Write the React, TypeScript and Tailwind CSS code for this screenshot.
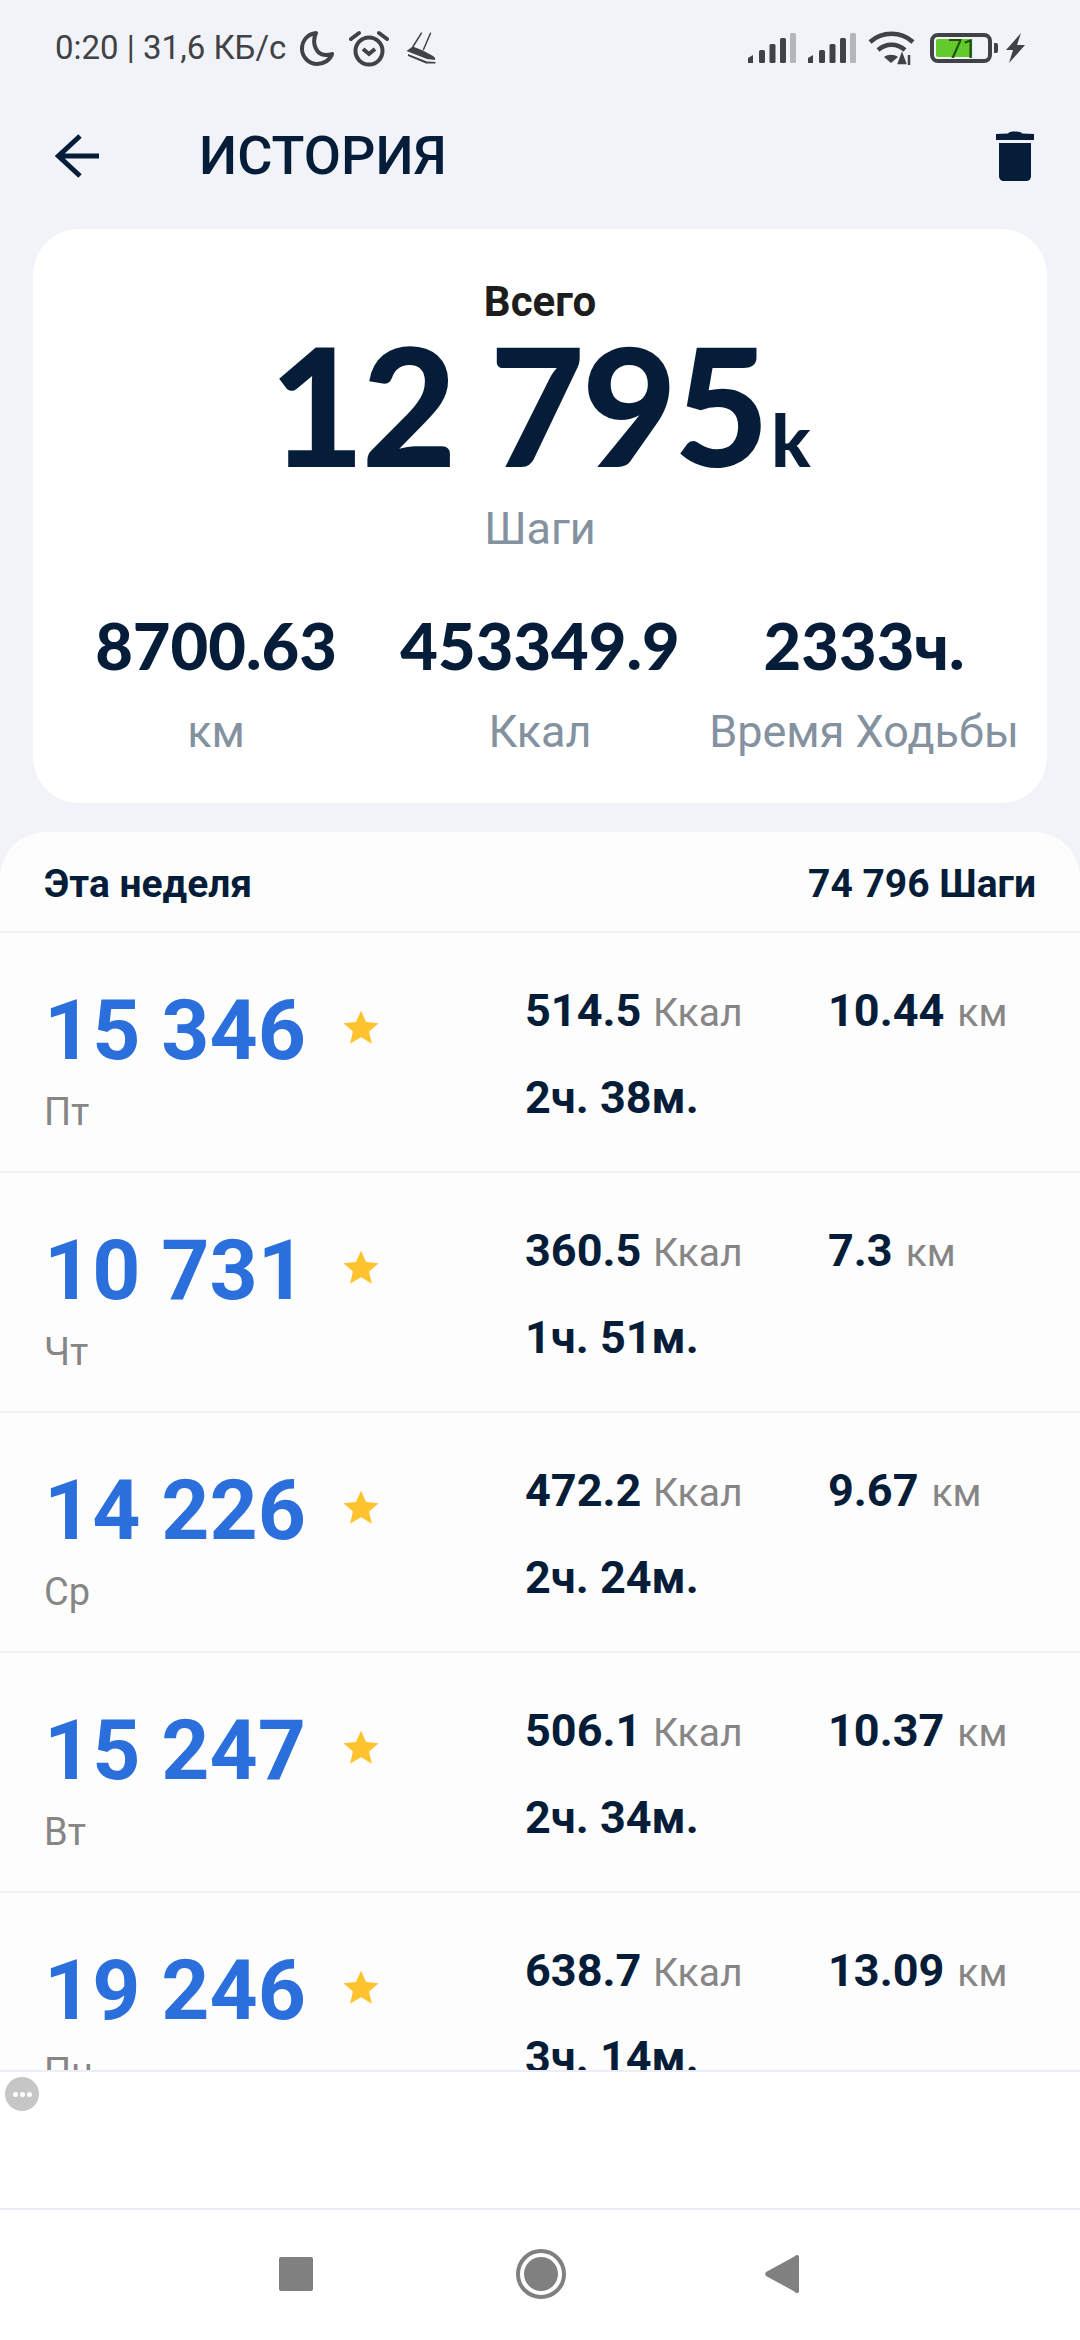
import React from "react";

const rows = [
  { steps: "15 346", day: "Пт", kcal: "514.5", km: "10.44", time: "2ч. 38м." },
  { steps: "10 731", day: "Чт", kcal: "360.5", km: "7.3", time: "1ч. 51м." },
  { steps: "14 226", day: "Ср", kcal: "472.2", km: "9.67", time: "2ч. 24м." },
  { steps: "15 247", day: "Вт", kcal: "506.1", km: "10.37", time: "2ч. 34м." },
  { steps: "19 246", day: "Пн", kcal: "638.7", km: "13.09", time: "3ч. 14м." },
];

function Star() {
  return (
    <svg viewBox="0 0 24 24" className="w-[38px] h-[38px] shrink-0 mt-[-9px]" fill="#fec32f">
      <path d="M12 1.600l3.200 7.300 7.900.7-6 5.200 1.800 7.800L12 18.500l-6.900 4.100 1.800-7.800-6-5.200 7.900-.7z" />
    </svg>
  );
}

function Signal() {
  return (
    <svg viewBox="0 0 48 30" className="w-[48px] h-[30px]">
      <path d="M0 30v-5l5-3v8z" fill="#404246" />
      <rect x="11" y="17" width="6" height="13" rx="1.5" fill="#404246" />
      <rect x="21.5" y="11" width="6" height="19" rx="1.5" fill="#404246" />
      <rect x="32" y="5" width="6" height="25" rx="1.5" fill="#404246" />
      <rect x="42" y="0" width="6" height="30" rx="1.5" fill="#b4b6ba" />
    </svg>
  );
}

function Row({ r }: { r: (typeof rows)[number] }) {
  return (
    <div className="h-[240px] shrink-0 border-b-2 border-[#f2f3f6] flex pl-[44px] pt-[50px]">
      <div className="w-[481px] shrink-0">
        <div className="flex items-center">
          <span className="w-[298px] font-['Roboto'] font-bold text-[84px] leading-[96px] text-[#2a6fdb]">{r.steps}</span>
          <Star />
        </div>
        <div className="font-['Roboto'] text-[38px] leading-[42px] text-[#868686] mt-[12px]">{r.day}</div>
      </div>
      <div className="w-[303px] shrink-0 pt-[3px]">
        <div className="h-[50px] flex items-baseline">
          <span className="font-['Roboto'] font-bold text-[45px] leading-[50px] text-[#051d38] w-[128px]">{r.kcal}</span>
          <span className="font-['Roboto'] text-[39px] leading-[50px] text-[#868686]">Ккал</span>
        </div>
        <div className="font-['Roboto'] font-bold text-[45px] leading-[50px] text-[#051d38] mt-[37px]">{r.time}</div>
      </div>
      <div className="flex items-baseline h-[50px] pt-[3px]">
        <span className="font-['Roboto'] font-bold text-[45px] leading-[50px] text-[#051d38]">{r.km}</span>
        <span className="font-['Roboto'] text-[39px] leading-[50px] text-[#868686] ml-[13px]">км</span>
      </div>
    </div>
  );
}

function Stat({ value, label, w }: { value: string; label: string; w: string }) {
  return (
    <div className={`${w} flex flex-col items-center`}>
      <div className="font-['Lato'] font-black text-[65px] leading-[76px] text-[#051d38] whitespace-nowrap">{value}</div>
      <div className="font-['Roboto'] text-[45px] leading-[50px] text-[#84919f] mt-[24px] whitespace-nowrap">{label}</div>
    </div>
  );
}

export default function App() {
  return (
    <div className="w-[1080px] h-[2340px] bg-[#f1f3f8] flex flex-col overflow-hidden font-['Roboto',sans-serif]">
      <div className="h-[96px] shrink-0 flex items-center pl-[55px] pr-[55px]">
        <span className="text-[33px] leading-[36px] text-[#404246] whitespace-nowrap w-[245px]">0:20 | 31,6 КБ/с</span>
        <svg viewBox="0 0 34 36" className="w-[34px] h-[36px]" fill="none" stroke="#404246" strokeWidth="4" strokeLinejoin="round">
          <path d="M16 3C8 4 2 10 2 19c0 8 7 15 15 15 7 0 13-4 15-10-2 1-5 1-6.500 1C17 25 11 14 16 3z" />
        </svg>
        <svg viewBox="0 0 40 38" className="w-[40px] h-[38px] ml-[15px]" fill="none" stroke="#404246">
          <circle cx="20" cy="22" r="13.500" strokeWidth="4" />
          <path d="M14 20l6 5 6-5" strokeWidth="4" />
          <path d="M2 10l8-6M38 10l-8-6" strokeWidth="4" strokeLinecap="round" />
        </svg>
        <svg viewBox="0 0 30 32" className="w-[30px] h-[32px] ml-[17px]" fill="#404246">
          <path d="M15.700.7L6.700 15M24.700.7L17.300 18" stroke="#404246" strokeWidth="1.500" fill="none" />
          <path d="M.5 19L6.700 14.500 17 18.500l10 5.500c2 1 2.500 3 2 4L21 27z" />
          <path d="M2 22l19 7.500 8.500.5v1.500H20L2 24z" />
        </svg>
        <div className="flex-1" />
        <div className="flex items-center w-[277px]">
          <Signal />
          <div className="ml-[12px]"><Signal /></div>
          <svg viewBox="0 0 47 34" className="w-[47px] h-[34px] ml-[12px]" fill="none" stroke="#404246" strokeWidth="4.500">
            <path d="M2 11c12-11 31-11 43 0" />
            <path d="M10 19c8-7 19-7 27 0" />
            <path d="M23 32l-7-6c4-3 10-3 14 0z" fill="#404246" stroke="none" />
            <path d="M34 24l-3 8h6zM41 24v10" fill="#404246" strokeWidth="2.500" stroke="#404246" />
          </svg>
          <div className="flex items-center ml-[15px]">
            <div className="w-[62px] h-[30px] rounded-[8px] border-[4px] border-[#404246] pl-[2px] pt-[2px] relative">
              <div className="w-[36px] h-[18px] bg-[#62cb2b] rounded-[2px]" />
              <span className="absolute left-[14px] top-[-3px] text-[26px] leading-[30px] text-[#1f5010]">71</span>
            </div>
            <div className="w-[4px] h-[10px] bg-[#404246] rounded-r-[2px] ml-[2px]" />
          </div>
          <svg viewBox="0 0 19 30" className="w-[19px] h-[30px] ml-[8px]" fill="#404246">
            <path d="M15 0L0 17h7L3 30l16-18h-8z" />
          </svg>
        </div>
      </div>

      <div className="h-[133px] shrink-0 flex items-center pl-[55px] pr-[46px] pb-[22px] pt-[8px]">
        <svg viewBox="0 0 44 44" className="w-[44px] h-[44px] mr-[100px]" fill="none" stroke="#051d38" strokeWidth="5">
          <path d="M25 2L3.500 22 25 42M4 22h40" />
        </svg>
        <span className="font-medium text-[54px] leading-[60px] text-[#051d38]">ИСТОРИЯ</span>
        <div className="flex-1" />
        <svg viewBox="0 0 38 50" className="w-[38px] h-[50px]" fill="#051d38">
          <path d="M12 2.500C13 1 15 .5 19 .5s6 .5 7 2L38 3v6H0V3z" />
          <path d="M3 12h32v33c0 3-2 5-5 5H8c-3 0-5-2-5-5z" />
        </svg>
      </div>

      <div className="mx-[33px] h-[574px] shrink-0 rounded-[46px] bg-white flex flex-col items-center pt-[50px]">
        <div className="font-bold text-[42px] leading-[46px] text-[#1d1d1d]">Всего</div>
        <div className="flex items-baseline font-['Lato'] font-black text-[#051d38] h-[133px] mt-[-6px]">
          <span className="text-[164px] leading-[170px] tracking-[-3px]">12 795</span>
          <span className="text-[72px] leading-[170px] ml-[5px]">k</span>
        </div>
        <div className="text-[45px] leading-[50px] text-[#84919f] mt-[52px]">Шаги</div>
        <div className="flex w-full mt-[53px]">
          <Stat value="8700.63" label="км" w="w-[366px]" />
          <Stat value="453349.9" label="Ккал" w="w-[282px]" />
          <Stat value="2333ч." label="Время Ходьбы" w="w-[366px]" />
        </div>
      </div>

      <div className="mt-[29px] h-[1238px] shrink-0 rounded-t-[46px] bg-[#fdfdfd] overflow-hidden flex flex-col">
        <div className="h-[101px] shrink-0 border-b-2 border-[#f2f3f6] flex items-center justify-between pl-[44px] pr-[44px] pt-[5px] font-bold text-[39px] text-[#051d38]">
          <span>Эта неделя</span>
          <span>74 796 Шаги</span>
        </div>
        {rows.map((r) => (
          <Row key={r.day} r={r} />
        ))}
      </div>

      <div className="relative h-[138px] shrink-0 bg-white border-t-2 border-[#eceef5]">
        <div className="absolute left-[5px] top-[5px] w-[34px] h-[34px] rounded-full bg-[#c6c6c6] flex items-center justify-center gap-[2px]">
          <span className="w-[5px] h-[5px] rounded-full bg-white" />
          <span className="w-[5px] h-[5px] rounded-full bg-white" />
          <span className="w-[5px] h-[5px] rounded-full bg-white" />
        </div>
      </div>

      <div className="flex-1 bg-white border-t-2 border-[#e9eaf2] flex items-center pl-[279px] pb-[3px]">
        <div className="w-[34px] h-[34px] bg-[#808080] rounded-[2px]" />
        <div className="w-[50px] h-[50px] rounded-full border-[4px] border-[#808080] p-[4px] ml-[203px] mr-[199px]">
          <div className="w-full h-full rounded-full bg-[#808080]" />
        </div>
        <svg viewBox="0 0 34 38" className="w-[34px] h-[38px]" fill="#808080">
          <path d="M32 0c1.500 0 2 1 2 2v34c0 1-.5 2-2 2-1 0-1.500-.5-2.500-1.500L1 21c-1-1-1-3 0-4L29.500 1.500C30.500.5 31 0 32 0z" />
        </svg>
      </div>
    </div>
  );
}
